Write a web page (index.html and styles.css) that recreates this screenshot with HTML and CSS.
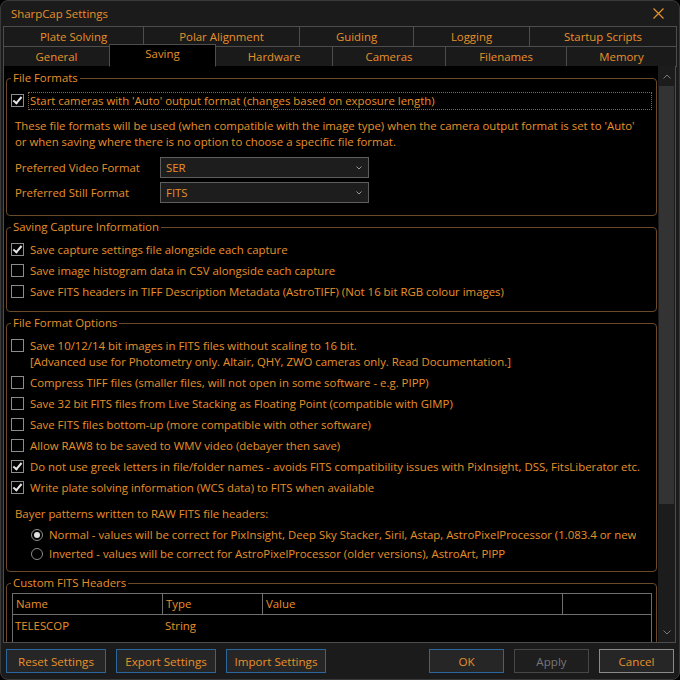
FILE: index.html
```html
<!DOCTYPE html>
<html>
<head>
  <meta charset="UTF-8">
  <title>SharpCap Settings</title>
  <link rel="stylesheet" href="styles.css">
</head>
<body>
  <div class="window">
    <div class="titlebar">
      <span class="title">SharpCap Settings</span>
      <svg class="close" width="11" height="11" viewBox="0 0 11 11">
        <path d="M0.5 0.5 L10.5 10.5 M10.5 0.5 L0.5 10.5" stroke="#e8912a" stroke-width="1.2" fill="none"/>
      </svg>
    </div>

    <div class="tabs">
      <div class="tab-row row-top">
        <div class="tab">Plate Solving</div>
        <div class="tab">Polar Alignment</div>
        <div class="tab">Guiding</div>
        <div class="tab">Logging</div>
        <div class="tab">Startup Scripts</div>
      </div>
      <div class="tab-row row-bottom">
        <div class="tab">General</div>
        <div class="tab selected">Saving</div>
        <div class="tab">Hardware</div>
        <div class="tab">Cameras</div>
        <div class="tab">Filenames</div>
        <div class="tab">Memory</div>
      </div>
    </div>

    <div class="panel">
      <div class="content">

        <fieldset class="group">
          <legend>File Formats</legend>
          <div class="rows">
            <div class="row">
              <span class="box on"></span>
              <span class="label focused">Start cameras with 'Auto' output format (changes based on exposure length)</span>
            </div>
          </div>
          <p class="desc">These file formats will be used (when compatible with the image type) when the camera output format is set to 'Auto' or when saving where there is no option to choose a specific file format.</p>
          <div class="formats">
            <span class="field-label">Preferred Video Format</span>
            <div class="combo">
              <span>SER</span>
              <svg width="6" height="4" viewBox="0 0 6 4"><path d="M0.5 0.5 L3 3 L5.5 0.5" stroke="#9a9a9a" fill="none"/></svg>
            </div>
            <span class="field-label">Preferred Still Format</span>
            <div class="combo">
              <span>FITS</span>
              <svg width="6" height="4" viewBox="0 0 6 4"><path d="M0.5 0.5 L3 3 L5.5 0.5" stroke="#9a9a9a" fill="none"/></svg>
            </div>
          </div>
        </fieldset>

        <fieldset class="group">
          <legend>Saving Capture Information</legend>
          <div class="rows last">
            <div class="row"><span class="box on"></span><span class="label">Save capture settings file alongside each capture</span></div>
            <div class="row"><span class="box"></span><span class="label">Save image histogram data in CSV alongside each capture</span></div>
            <div class="row"><span class="box"></span><span class="label">Save FITS headers in TIFF Description Metadata (AstroTIFF) (Not 16 bit RGB colour images)</span></div>
          </div>
        </fieldset>

        <fieldset class="group">
          <legend>File Format Options</legend>
          <div class="rows">
            <div class="row"><span class="box"></span><span class="label">Save 10/12/14 bit images in FITS files without scaling to 16 bit.<br>[Advanced use for Photometry only. Altair, QHY, ZWO cameras only. Read Documentation.]</span></div>
            <div class="row"><span class="box"></span><span class="label">Compress TIFF files (smaller files, will not open in some software - e.g. PIPP)</span></div>
            <div class="row"><span class="box"></span><span class="label">Save 32 bit FITS files from Live Stacking as Floating Point (compatible with GIMP)</span></div>
            <div class="row"><span class="box"></span><span class="label">Save FITS files bottom-up (more compatible with other software)</span></div>
            <div class="row"><span class="box"></span><span class="label">Allow RAW8 to be saved to WMV video (debayer then save)</span></div>
            <div class="row"><span class="box on"></span><span class="label">Do not use greek letters in file/folder names - avoids FITS compatibility issues with PixInsight, DSS, FitsLiberator etc.</span></div>
            <div class="row"><span class="box on"></span><span class="label">Write plate solving information (WCS data) to FITS when available</span></div>
          </div>
          <p class="bayer">Bayer patterns written to RAW FITS file headers:</p>
          <div class="radios">
            <div class="radio-row"><span class="radio on"></span><span class="radio-label">Normal - values will be correct for PixInsight, Deep Sky Stacker, Siril, Astap, AstroPixelProcessor (1.083.4 or newer)</span></div>
            <div class="radio-row"><span class="radio"></span><span class="radio-label">Inverted - values will be correct for AstroPixelProcessor (older versions), AstroArt, PIPP</span></div>
          </div>
        </fieldset>

        <fieldset class="group">
          <legend>Custom FITS Headers</legend>
          <div class="fits-table">
            <div class="th">Name</div>
            <div class="th">Type</div>
            <div class="th">Value</div>
            <div class="th last"></div>
            <div class="td">TELESCOP</div>
            <div class="td">String</div>
            <div class="td"></div>
            <div class="td"></div>
          </div>
        </fieldset>

      </div>
      <div class="scrollbar">
        <div class="arrow">
          <svg width="8" height="5" viewBox="0 0 8 5"><path d="M0.5 4.5 L4 1 L7.5 4.5" stroke="#7a7a7a" fill="none"/></svg>
        </div>
        <div class="track">
          <div class="thumb"></div>
        </div>
        <div class="arrow">
          <svg width="8" height="5" viewBox="0 0 8 5"><path d="M0.5 0.5 L4 4 L7.5 0.5" stroke="#7a7a7a" fill="none"/></svg>
        </div>
      </div>
    </div>

    <div class="footer">
      <button class="btn">Reset Settings</button>
      <button class="btn">Export Settings</button>
      <button class="btn">Import Settings</button>
      <button class="btn small ok">OK</button>
      <button class="btn small disabled">Apply</button>
      <button class="btn small cancel">Cancel</button>
    </div>
  </div>
</body>
</html>
```

FILE: styles.css
```css
body {
  margin: 0;
  padding: 0;
  background: #000;
  font-family: 'Open Sans', 'Noto Sans', sans-serif;
  font-size: 11.4px;
  color: #e8912a;
}

.window {
  width: 680px;
  height: 680px;
  box-sizing: border-box;
  border: 1px solid #3a3a3a;
  border-radius: 8px;
  background: #1b1b1b;
  display: flex;
  flex-direction: column;
  overflow: hidden;
}

/* Title bar */
.titlebar {
  height: 25px;
  flex: none;
  display: flex;
  align-items: center;
  justify-content: space-between;
  padding: 0 15px 0 10px;
}

/* Two rows of tabs */
.tabs {
  flex: none;
  margin: 0 2px 0 2px;
}

.tab-row {
  display: flex;
  height: 20px;
}

.tab {
  box-sizing: border-box;
  height: 21px;
  border: 1px solid #4d4d4d;
  margin-left: -1px;
  background: #1a1a1a;
  display: flex;
  align-items: center;
  justify-content: center;
  line-height: 16px;
}

.tab:first-child {
  margin-left: 0;
}

.row-top .tab:nth-child(1) { width: 141px; }
.row-top .tab:nth-child(2) { width: 157px; }
.row-top .tab:nth-child(3) { width: 115px; }
.row-top .tab:nth-child(4) { width: 117px; }
.row-top .tab:nth-child(5) { flex: 1; }

.row-bottom .tab:nth-child(1) { width: 107px; }
.row-bottom .tab:nth-child(2) { width: 107px; }
.row-bottom .tab:nth-child(3) { width: 118px; }
.row-bottom .tab:nth-child(4) { width: 114px; }
.row-bottom .tab:nth-child(5) { width: 122px; }
.row-bottom .tab:nth-child(6) { flex: 1; }

.tab.selected {
  position: relative;
  z-index: 1;
  height: 23px;
  margin-top: -2px;
  background: #000;
  border-bottom-color: #000;
  padding-bottom: 3px;
}

/* Page area */
.panel {
  height: 577px;
  flex: none;
  box-sizing: border-box;
  margin: 0 3px 0 2px;
  border: 1px solid #4d4d4d;
  border-top: none;
  background: #000;
  display: flex;
}

.content {
  flex: 1;
  min-width: 0;
  overflow: hidden;
  padding: 4px 1px 0 2px;
}

.group {
  margin: 3px 0 0;
  padding: 0 4px;
  border: 1px solid #6a4a2b;
  border-radius: 4px;
  min-width: 0;
}

.group:first-child {
  margin-top: 0;
}

.group legend {
  padding: 0 2px;
  line-height: 16px;
}

.rows {
  margin-top: 4px;
}

.rows.last {
  margin-bottom: 9px;
}

.row {
  display: flex;
  align-items: flex-start;
  padding: 2.5px 0;
  line-height: 16px;
}

.box {
  flex: none;
  position: relative;
  width: 13px;
  height: 13px;
  box-sizing: border-box;
  margin-top: 1.5px;
  border: 1px solid #8c8c8c;
  background: #000;
}

.box.on::after {
  content: '';
  position: absolute;
  left: 3px;
  top: 0px;
  width: 3px;
  height: 7px;
  border: solid #e6e6e6;
  border-width: 0 2px 2px 0;
  transform: rotate(40deg);
}

.label {
  margin: -1px 0 -1px 4px;
  padding: 0 1px;
  border: 1px dotted transparent;
  white-space: nowrap;
}

.label.focused {
  flex: 1;
  border-color: #8a6638;
}

.desc {
  margin: 7px 0 0 4px;
  line-height: 16px;
  padding-right: 10px;
}

.formats {
  display: grid;
  grid-template-columns: 145px 209px;
  row-gap: 4px;
  align-items: center;
  margin: 7px 0 12px 4px;
}

.combo {
  height: 21px;
  box-sizing: border-box;
  border: 1px solid #5e5e5e;
  background: #1d1d1d;
  display: flex;
  align-items: center;
  justify-content: space-between;
  padding: 0 6px 0 5px;
}

.bayer {
  margin: 8px 0 0 4px;
  line-height: 16px;
}

.radios {
  margin: 3px 0 8px 20px;
}

.radio-row {
  display: flex;
  align-items: center;
  height: 19px;
}

.radio {
  flex: none;
  width: 12px;
  height: 12px;
  box-sizing: border-box;
  border: 1px solid #8c8c8c;
  border-radius: 50%;
  display: flex;
  align-items: center;
  justify-content: center;
}

.radio.on::after {
  content: '';
  width: 6px;
  height: 6px;
  border-radius: 50%;
  background: #e0e0e0;
}

/* the first option is wider than the box and gets clipped, as in the app */
.radio-label {
  margin-left: 6px;
  width: 587px;
  white-space: nowrap;
  overflow: hidden;
}

/* Custom headers grid */
.fits-table {
  margin: 2px 0 0 1px;
  border: 1px solid #6e6e6e;
  display: grid;
  grid-template-columns: 150px 100px 300px 1fr;
  grid-template-rows: 21px 1fr;
  height: 60px;
}

.th {
  border-right: 1px solid #6e6e6e;
  border-bottom: 1px solid #6e6e6e;
  padding-left: 3px;
  line-height: 20px;
}

.th.last {
  border-right: none;
}

.td {
  padding: 3px 0 0 2px;
  line-height: 16px;
}

/* Scroll bar */
.scrollbar {
  width: 17px;
  flex: none;
  background: #1c1c1c;
  display: flex;
  flex-direction: column;
}

.arrow {
  height: 20px;
  display: flex;
  align-items: center;
  justify-content: center;
}

.track {
  flex: 1;
}

.thumb {
  height: 418px;
  margin: 0 1px;
  background: #333;
}

/* Buttons */
.footer {
  flex: 1;
  display: flex;
  gap: 10px;
  padding: 6px 5px 0 5px;
}

.btn {
  width: 100px;
  height: 24px;
  box-sizing: border-box;
  border: 1px solid #2b679e;
  background: #262626;
  color: #e8912a;
  font-family: 'Open Sans', 'Noto Sans', sans-serif;
  font-size: 11.6px;
  padding: 0;
}

.btn.small {
  width: 75px;
}

.btn.ok {
  margin-left: auto;
}

.btn.disabled {
  border-color: #474747;
  background: #1e1e1e;
  color: #777;
}

.btn.cancel {
  border-color: #8a8a8a;
}
```
